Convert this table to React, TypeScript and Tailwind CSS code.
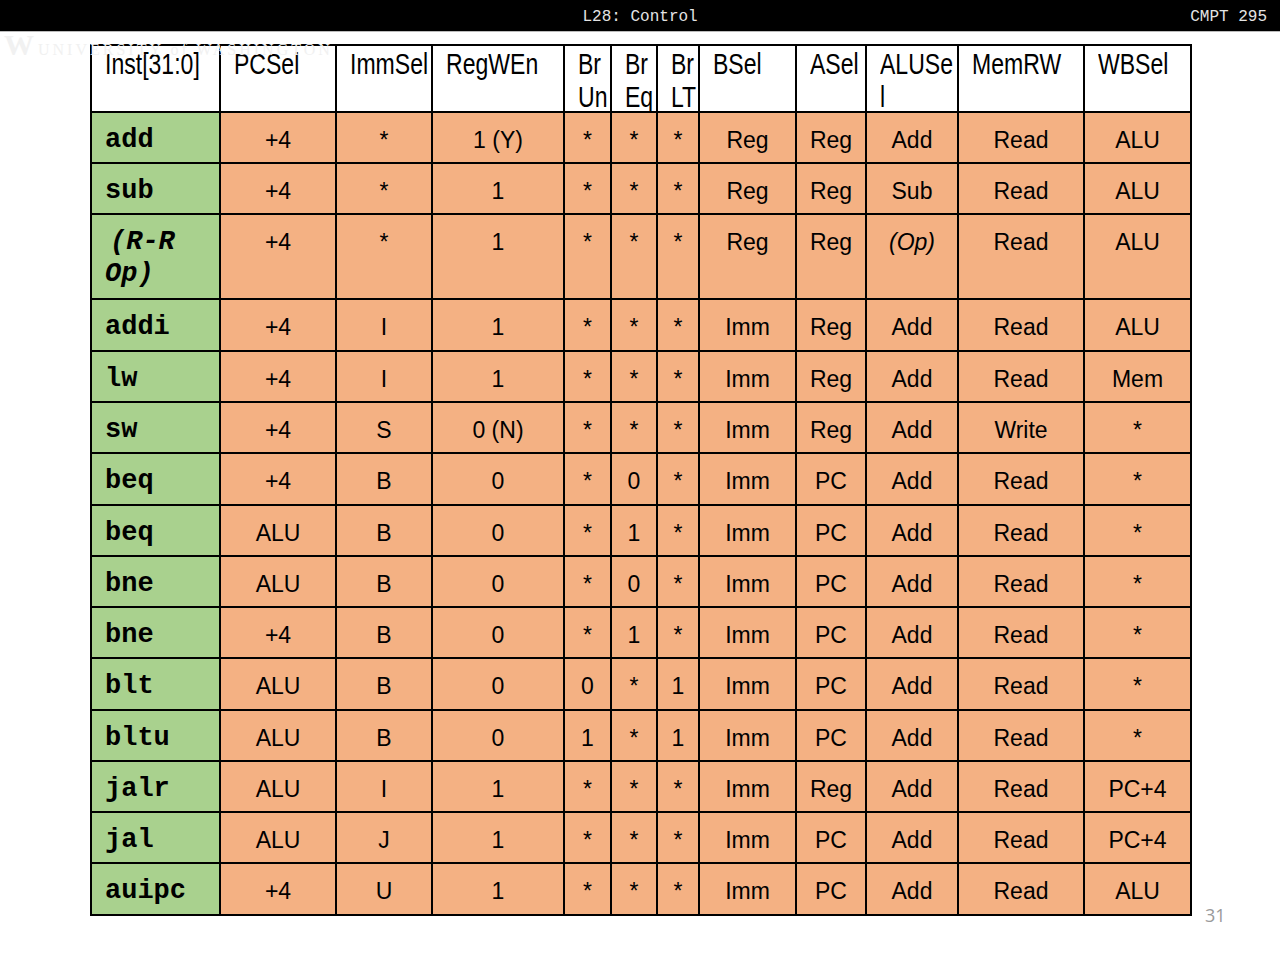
const COLS = [129, 116, 96, 132, 47, 46, 42, 97, 70, 92, 126, 107];

const HEADS: string[][] = [
  ["Inst[31:0]"],
  ["PCSel"],
  ["ImmSel"],
  ["RegWEn"],
  ["Br", "Un"],
  ["Br", "Eq"],
  ["Br", "LT"],
  ["BSel"],
  ["ASel"],
  ["ALUSe", "l"],
  ["MemRW"],
  ["WBSel"],
];

// inst, then 11 control values
const ROWS: { inst: string; h: number; vals: string[]; rr?: boolean }[] = [
  { inst: "add", h: 51, vals: ["+4", "*", "1 (Y)", "*", "*", "*", "Reg", "Reg", "Add", "Read", "ALU"] },
  { inst: "sub", h: 51, vals: ["+4", "*", "1", "*", "*", "*", "Reg", "Reg", "Sub", "Read", "ALU"] },
  { inst: "(R-R Op)", h: 85, rr: true, vals: ["+4", "*", "1", "*", "*", "*", "Reg", "Reg", "(Op)", "Read", "ALU"] },
  { inst: "addi", h: 52, vals: ["+4", "I", "1", "*", "*", "*", "Imm", "Reg", "Add", "Read", "ALU"] },
  { inst: "lw", h: 51, vals: ["+4", "I", "1", "*", "*", "*", "Imm", "Reg", "Add", "Read", "Mem"] },
  { inst: "sw", h: 51, vals: ["+4", "S", "0 (N)", "*", "*", "*", "Imm", "Reg", "Add", "Write", "*"] },
  { inst: "beq", h: 52, vals: ["+4", "B", "0", "*", "0", "*", "Imm", "PC", "Add", "Read", "*"] },
  { inst: "beq", h: 51, vals: ["ALU", "B", "0", "*", "1", "*", "Imm", "PC", "Add", "Read", "*"] },
  { inst: "bne", h: 51, vals: ["ALU", "B", "0", "*", "0", "*", "Imm", "PC", "Add", "Read", "*"] },
  { inst: "bne", h: 51, vals: ["+4", "B", "0", "*", "1", "*", "Imm", "PC", "Add", "Read", "*"] },
  { inst: "blt", h: 52, vals: ["ALU", "B", "0", "0", "*", "1", "Imm", "PC", "Add", "Read", "*"] },
  { inst: "bltu", h: 51, vals: ["ALU", "B", "0", "1", "*", "1", "Imm", "PC", "Add", "Read", "*"] },
  { inst: "jalr", h: 51, vals: ["ALU", "I", "1", "*", "*", "*", "Imm", "Reg", "Add", "Read", "PC+4"] },
  { inst: "jal", h: 51, vals: ["ALU", "J", "1", "*", "*", "*", "Imm", "PC", "Add", "Read", "PC+4"] },
  { inst: "auipc", h: 52, vals: ["+4", "U", "1", "*", "*", "*", "Imm", "PC", "Add", "Read", "ALU"] },
];

const sans = "font-['Liberation_Sans',Arial,sans-serif]";
const mono = "font-['Liberation_Mono','Courier_New',monospace]";

export default function App() {
  return (
    <div className="relative h-[960px] w-[1280px] overflow-hidden bg-white">
      {/* 顶栏 */}
      <div className="flex h-[32px] items-center justify-between border-b border-[#bbb] bg-black pr-[13px] pt-[3px] font-['Liberation_Mono',monospace] text-[16px] text-[#e4e4e4]">
        <div className="w-[90px]" />
        <div>L28: Control</div>
        <div>CMPT 295</div>
      </div>

      {/* 水印 */}
      <div className="pointer-events-none absolute left-[4px] top-[30px] z-10 flex items-baseline gap-[8px] font-['Liberation_Serif',serif] text-[#f1f1f1]">
        <span className="text-[30px] font-bold leading-none tracking-[-4px]">W</span>
        <span className="text-[16px] tracking-[3px]">UNIVERSITY of WASHINGTON</span>
      </div>

      <div className="flex items-end pl-[90px] pt-[12px]">
        <table className="w-[1100px] table-fixed border-collapse border-[2px] border-black">
          <colgroup>
            {COLS.map((w, i) => (
              <col key={i} style={{ width: w }} />
            ))}
          </colgroup>
          <thead>
            <tr className="h-[67px]">
              {HEADS.map((lines, i) => (
                <th
                  key={i}
                  className={`border-[2px] border-black bg-white pl-[13px] pt-[2px] text-left align-top text-[24px] font-normal leading-[27px] whitespace-nowrap text-black ${sans}`}
                >
                  <span className="inline-block origin-top-left scale-x-[0.96] scale-y-[1.2]">
                    {lines.map((l, j) => (
                      <div key={j}>{l}</div>
                    ))}
                  </span>
                </th>
              ))}
            </tr>
          </thead>
          <tbody>
            {ROWS.map((r, ri) => (
              <tr key={ri} style={{ height: r.h }}>
                <td
                  className={`border-[2px] border-black bg-[#a9d18e] pl-[13px] pt-[11px] align-top text-[27px] font-bold leading-[32px] text-black ${mono}`}
                >
                  {r.rr ? (
                    <span className="italic">
                      <div className="pl-[5px]">(R-R</div>
                      <div>Op)</div>
                    </span>
                  ) : (
                    r.inst
                  )}
                </td>
                {r.vals.map((v, vi) => (
                  <td
                    key={vi}
                    className={`border-[2px] border-black bg-[#f4b183] pt-[14px] text-center align-top text-[23px] leading-[26px] whitespace-nowrap text-black ${sans}`}
                  >
                    {v === "(Op)" ? <span className="italic">(Op)</span> : v}
                  </td>
                ))}
              </tr>
            ))}
          </tbody>
        </table>
        <div className="mb-[-13px] ml-[13px] font-['Open_Sans',sans-serif] text-[18px] text-[#9a9a9a]">31</div>
      </div>
    </div>
  );
}
